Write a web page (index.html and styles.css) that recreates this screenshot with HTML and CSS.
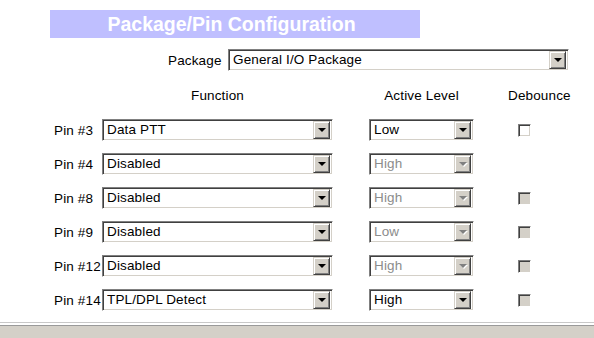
FILE: index.html
```html
<!DOCTYPE html>
<html lang="en">
  <head>
    <meta charset="UTF-8" />
    <title>Package/Pin Configuration</title>
    <link rel="stylesheet" href="styles.css">
  </head>
  <body>
    <div class="page">
      <div class="title">Package/Pin Configuration</div>

      <div class="package-row">
        <span class="label">Package</span>
        <div class="select wide"><span class="value">General I/O Package</span><span class="btn"></span></div>
      </div>

      <div class="pins">
        <div></div>
        <div class="head func">Function</div>
        <div class="head level">Active Level</div>
        <div class="head deb">Debounce</div>

        <div class="pin">Pin #3</div>
        <div class="select func"><span class="value">Data PTT</span><span class="btn"></span></div>
        <div class="select level"><span class="value">Low</span><span class="btn"></span></div>
        <div class="cell"><span class="check"></span></div>

        <div class="pin">Pin #4</div>
        <div class="select func"><span class="value">Disabled</span><span class="btn"></span></div>
        <div class="select level disabled"><span class="value">High</span><span class="btn"></span></div>
        <div class="cell"></div>

        <div class="pin">Pin #8</div>
        <div class="select func"><span class="value">Disabled</span><span class="btn"></span></div>
        <div class="select level disabled"><span class="value">High</span><span class="btn"></span></div>
        <div class="cell"><span class="check disabled"></span></div>

        <div class="pin">Pin #9</div>
        <div class="select func"><span class="value">Disabled</span><span class="btn"></span></div>
        <div class="select level disabled"><span class="value">Low</span><span class="btn"></span></div>
        <div class="cell"><span class="check disabled"></span></div>

        <div class="pin">Pin #12</div>
        <div class="select func"><span class="value">Disabled</span><span class="btn"></span></div>
        <div class="select level disabled"><span class="value">High</span><span class="btn"></span></div>
        <div class="cell"><span class="check disabled"></span></div>

        <div class="pin">Pin #14</div>
        <div class="select func"><span class="value">TPL/DPL Detect</span><span class="btn"></span></div>
        <div class="select level"><span class="value">High</span><span class="btn"></span></div>
        <div class="cell"><span class="check disabled"></span></div>
      </div>
    </div>
    <div class="footer"></div>
  </body>
</html>
```

FILE: styles.css
```css
:root {
  --face: #d4d0c8;
  --shadow: #808080;
  --dark: #404040;
  --light: #ffffff;
}

body {
  margin: 0;
  background: #fff;
  font-family: "Liberation Sans", Arial, sans-serif;
  font-size: 13.5px;
  letter-spacing: 0.15px;
  color: #000;
}

.page {
  padding-top: 10px;
  height: 322px;
  box-sizing: border-box;
}

.title {
  margin-left: 50px;
  width: 370px;
  height: 28px;
  line-height: 28px;
  padding-right: 7px;
  box-sizing: border-box;
  background: #bfbfff;
  color: #fff;
  font-size: 19.5px;
  letter-spacing: 0;
  font-weight: bold;
  text-align: center;
}

.package-row {
  display: flex;
  align-items: center;
  margin-top: 11px;
  padding-left: 168px;
}
.package-row .label {
  width: 60px;
}

/* fake windows-classic combo box */
.select {
  display: flex;
  align-items: center;
  height: 22px;
  box-sizing: border-box;
  border: 1px solid;
  border-color: var(--shadow) var(--light) var(--light) var(--shadow);
  box-shadow: inset 1px 1px var(--dark), inset -1px -1px var(--face);
  padding: 2px 2px 2px 4px;
  background: #fff;
}
.select .value {
  flex: 1;
  line-height: 16px;
  white-space: nowrap;
  overflow: hidden;
}
.select .btn {
  position: relative;
  width: 17px;
  height: 18px;
  box-sizing: border-box;
  background: var(--face);
  border: 1px solid;
  border-color: var(--face) var(--dark) var(--dark) var(--face);
  box-shadow: inset 1px 1px var(--light), inset -1px -1px var(--shadow);
}
.select .btn::after {
  content: "";
  position: absolute;
  left: 4px;
  top: 6px;
  border-left: 4px solid transparent;
  border-right: 4px solid transparent;
  border-top: 4px solid #000;
}
.select.disabled .value {
  color: #8c8c8c;
}
.select.disabled .btn::after {
  border-top-color: var(--shadow);
  filter: drop-shadow(1px 1px 0 var(--light));
}

.wide {
  width: 341px;
}
.select.func {
  width: 231px;
}
.select.level {
  width: 105px;
}

.pins {
  display: grid;
  grid-template-columns: 102px 267px 139px 1fr;
  grid-template-rows: 19px;
  grid-auto-rows: 22px;
  row-gap: 12px;
  margin-top: 17px;
}

.head {
  line-height: 16px;
}
.head.func {
  width: 231px;
  text-align: center;
}
.head.level {
  width: 105px;
  text-align: center;
}

.pin {
  padding-left: 54px;
  align-self: center;
  white-space: nowrap;
}

.cell {
  display: flex;
  align-items: center;
  padding-left: 10px;
}

.check {
  width: 13px;
  height: 13px;
  box-sizing: border-box;
  border: 1px solid;
  border-color: var(--shadow) var(--light) var(--light) var(--shadow);
  box-shadow: inset 1px 1px var(--dark), inset -1px -1px var(--face);
  background: #fff;
}
.check.disabled {
  background: var(--face);
}

.footer {
  height: 16px;
  box-sizing: border-box;
  border-top: 1px solid #c8c8c8;
  padding-top: 2px;
  background: #fff;
}
.footer::after {
  content: "";
  display: block;
  height: 100%;
  border-top: 1px solid #9a9a9a;
  background: var(--face);
}
```
